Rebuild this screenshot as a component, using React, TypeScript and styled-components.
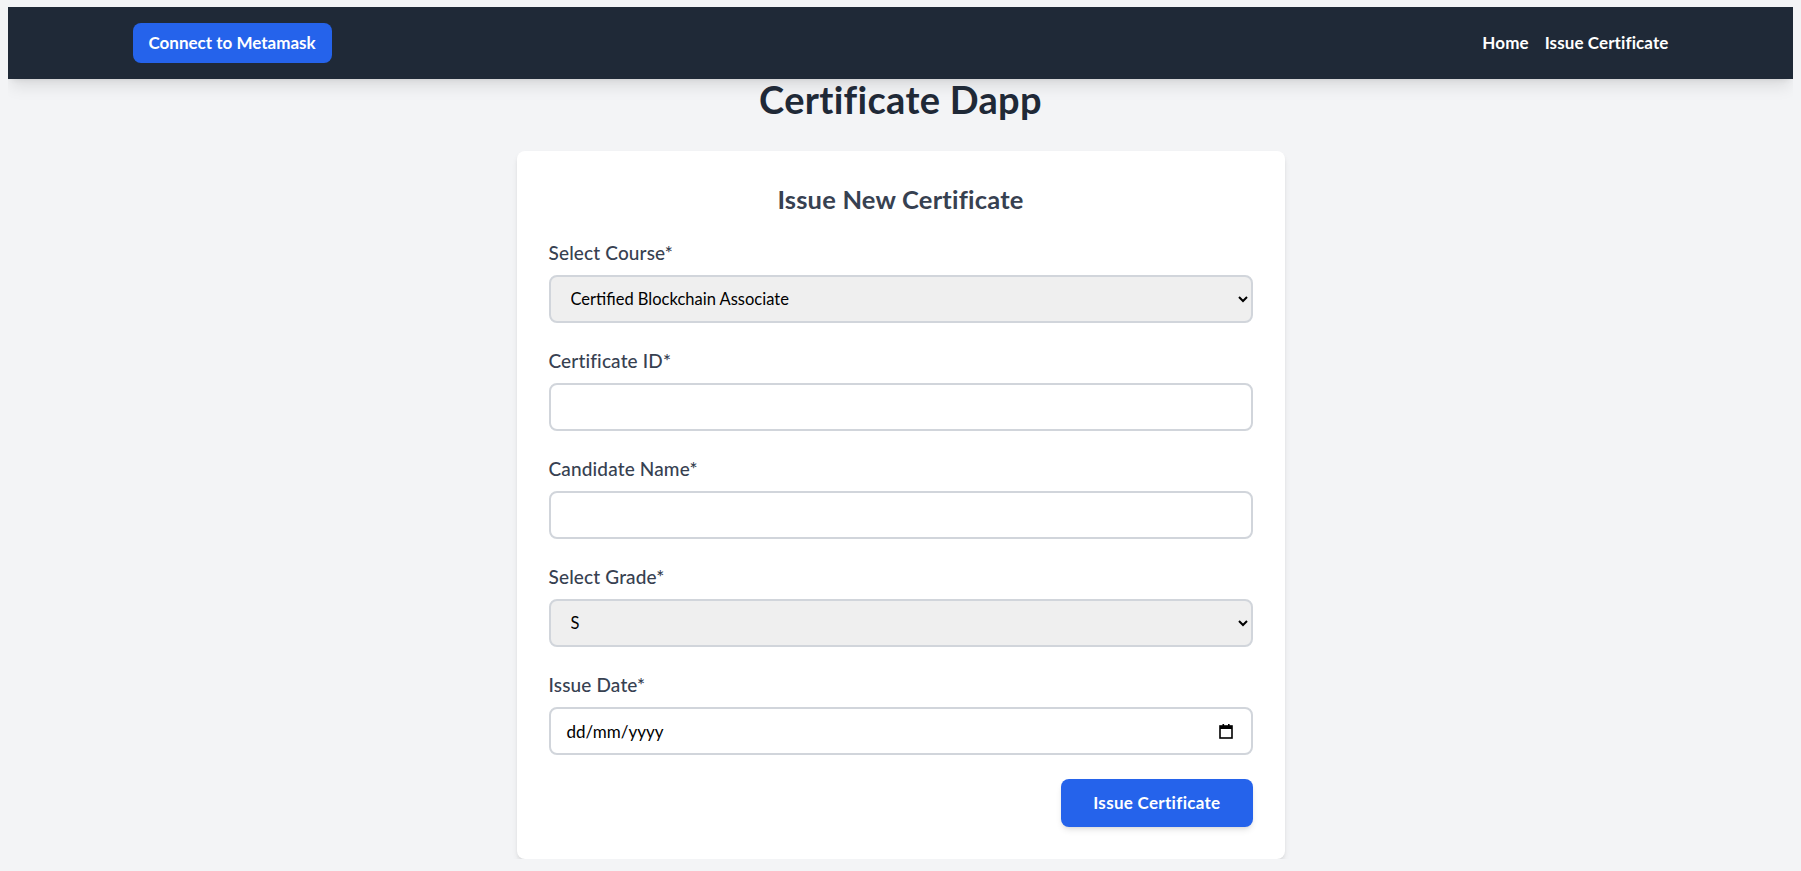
import React from "react";
import styled, { createGlobalStyle } from "styled-components";

const GlobalStyle = createGlobalStyle`
  html, body {
    background: #f3f4f6;
  }
  body {
    margin: 7px 8px 8px;
    font-family: Lato, "Noto Sans", sans-serif;
    color: #1f2937;
  }
  * {
    box-sizing: border-box;
  }
`;

const courses = ["Certified Blockchain Associate", "Certified Ethereum Developer", "Blockchain Foundation"];
const grades = ["S", "A", "B", "C"];

const App = () => {
  return (
    <>
      <GlobalStyle />
      <Header>
        <HeaderInner>
          <PrimaryButton type="button" size="sm">
            Connect to Metamask
          </PrimaryButton>
          <NavLinks>
            <NavLink href="#">Home</NavLink>
            <NavLink href="#">Issue Certificate</NavLink>
          </NavLinks>
        </HeaderInner>
      </Header>

      <Title>Certificate Dapp</Title>

      <Card>
        <CardTitle>Issue New Certificate</CardTitle>
        <form onSubmit={(e) => e.preventDefault()}>
          <Field>
            <Label htmlFor="course">Select Course*</Label>
            <Select id="course" defaultValue={courses[0]}>
              {courses.map((c) => (
                <option key={c}>{c}</option>
              ))}
            </Select>
          </Field>
          <Field>
            <Label htmlFor="certId">Certificate ID*</Label>
            <Input id="certId" type="text" />
          </Field>
          <Field>
            <Label htmlFor="name">Candidate Name*</Label>
            <Input id="name" type="text" />
          </Field>
          <Field>
            <Label htmlFor="grade">Select Grade*</Label>
            <Select id="grade" defaultValue={grades[0]}>
              {grades.map((g) => (
                <option key={g}>{g}</option>
              ))}
            </Select>
          </Field>
          <Field>
            <Label>Issue Date*</Label>
            <DateBox>
              <span>dd/mm/yyyy</span>
              <svg width="14" height="16" viewBox="0 0 14 16">
                <rect x="1" y="3" width="12" height="12" fill="none" stroke="#000" strokeWidth="1.6" />
                <rect x="1" y="3" width="12" height="3" fill="#000" />
                <rect x="3.5" y="1" width="1.6" height="3" fill="#000" />
                <rect x="9" y="1" width="1.6" height="3" fill="#000" />
              </svg>
            </DateBox>
          </Field>
          <Actions>
            <PrimaryButton type="submit" size="lg">
              Issue Certificate
            </PrimaryButton>
          </Actions>
        </form>
      </Card>
    </>
  );
};

export default App;

const Header = styled.nav`
  background: #1f2937;
  box-shadow: 0 10px 15px -3px rgba(0, 0, 0, 0.1), 0 4px 6px -4px rgba(0, 0, 0, 0.1);
`;

const HeaderInner = styled.div`
  display: flex;
  justify-content: space-between;
  align-items: center;
  max-width: 1536px;
  margin: 0 auto;
  padding: 16px 0;
`;

const NavLinks = styled.div`
  display: flex;
  align-items: center;
  gap: 16px;
`;

const NavLink = styled.a`
  color: #ffffff;
  font-weight: 700;
  font-size: 17px;
  line-height: 24px;
  letter-spacing: 0.1px;
  text-decoration: none;
`;

const PrimaryButton = styled.button<{ size: "sm" | "lg" }>`
  border: none;
  background: #2563eb;
  color: #ffffff;
  font-family: inherit;
  font-weight: 700;
  font-size: 17px;
  line-height: 24px;
  letter-spacing: ${(p) => (p.size === "lg" ? "0.3px" : "0")};
  border-radius: 8px;
  cursor: pointer;
  padding: ${(p) => (p.size === "lg" ? "12px 32px" : "8px 16px")};
  box-shadow: ${(p) =>
    p.size === "lg" ? "0 4px 6px -1px rgba(0,0,0,0.1), 0 2px 4px -2px rgba(0,0,0,0.1)" : "none"};
`;

const Title = styled.h1`
  margin: 0 0 32px;
  text-align: center;
  font-size: 38px;
  line-height: 40px;
  font-weight: 700;
  letter-spacing: 0.3px;
  color: #1f2937;
`;

const Card = styled.div`
  max-width: 768px;
  margin: 0 auto;
  background: #ffffff;
  border-radius: 8px;
  padding: 32px;
  box-shadow: 0 4px 6px -1px rgba(0, 0, 0, 0.1), 0 2px 4px -2px rgba(0, 0, 0, 0.1);
`;

const CardTitle = styled.h2`
  margin: 0 0 24px;
  text-align: center;
  font-size: 25.5px;
  line-height: 32px;
  font-weight: 700;
  letter-spacing: 0.2px;
  color: #374151;
`;

const Field = styled.div`
  margin-bottom: 24px;
`;

const Label = styled.label`
  display: block;
  margin-bottom: 8px;
  font-size: 19px;
  line-height: 28px;
  font-weight: 500;
  letter-spacing: 0.15px;
  color: #374151;
`;

const controlBase = `
  display: block;
  width: 100%;
  height: 48px;
  border: 2px solid #d1d5db;
  border-radius: 8px;
  padding: 0 16px;
  font-family: inherit;
  font-size: 16.5px;
  color: #000;
  outline: none;
`;

const Input = styled.input`
  ${controlBase}
  background: #ffffff;
`;

const Select = styled.select`
  ${controlBase}
  background-color: #efefef;
`;

const DateBox = styled.div`
  ${controlBase}
  display: flex;
  align-items: center;
  justify-content: space-between;
  padding: 0 18px 0 16px;
  font-size: 17px;
  background: #ffffff;
`;

const Actions = styled.div`
  display: flex;
  justify-content: flex-end;
`;
